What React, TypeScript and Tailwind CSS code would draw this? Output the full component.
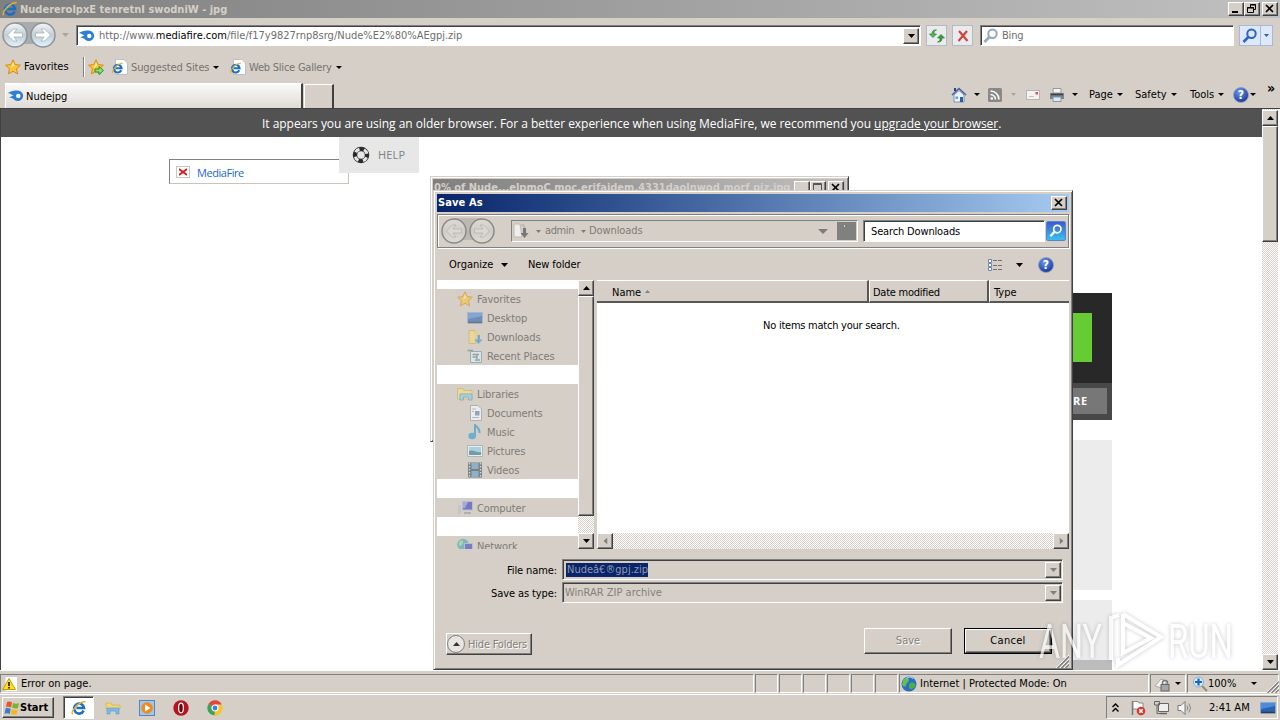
import type { ReactNode } from "react";
import clsx from "clsx";
import { twMerge } from "tailwind-merge";

const RAISED =
    "bg-[#d5cfc7] border border-t-white border-l-white border-b-[#404040] border-r-[#404040] shadow-[inset_-1px_-1px_0_#808080]";
const SUNKEN =
    "border border-t-[#808080] border-l-[#808080] border-b-white border-r-white shadow-[inset_1px_1px_0_#404040]";
const CHECKER = "bg-[repeating-conic-gradient(#ffffff_0_25%,#d5cfc7_0_50%)] bg-[length:2px_2px]";

type BoxProps = { className?: string; children?: ReactNode };

const Txt = ({ className, children }: BoxProps) => (
    <span className={clsx("block shrink-0 whitespace-nowrap", className)}>{children}</span>
);

const Arrow = ({ className, up }: { className?: string; up?: boolean }) => (
    <svg className={twMerge("h-[4px] w-[7px] shrink-0", className)} viewBox="0 0 7 4" fill="currentColor" preserveAspectRatio="none">
        <path d={up ? "M0 4 3.5 0 7 4Z" : "M0 0H7L3.5 4Z"} />
    </svg>
);

const Icon = ({ className, children }: BoxProps) => (
    <svg className={twMerge("size-4 shrink-0", className)} viewBox="0 0 16 16" fill="none">
        {children}
    </svg>
);

const IeIcon = ({ className, page }: { className?: string; page?: boolean }) => (
    <Icon className={className}>
        {page && <path d="M3.5 .5H12L15.5 4V15.5H3.5Z" fill="#fff" stroke="#b8c0cc" />}
        <g transform={page ? "translate(-.5 3) scale(.78)" : undefined}>
            <path d="M12.6 10.6A5 5 0 1 1 13 8H5.4" stroke="#1c6fc4" strokeWidth="2.6" />
            <path d="M4.4 6.2A4.2 4.2 0 0 1 9 4" stroke="#62b8f2" strokeWidth="1" />
            <path d="M1.6 14.2C-.8 11.5 9 .6 14.6 1.8" stroke="#e3b32c" strokeWidth="1.4" />
        </g>
    </Icon>
);

const FireIcon = ({ className }: { className?: string }) => (
    <Icon className={className}>
        <path d="M0 5C3 3 6 2.5 10 2.5A5.3 5.3 0 1 1 6 11.5C4.500 10 3 9.500 1 9.800C3 8.500 4 8 5.500 7.800C4 6.500 2 5.500 0 5Z" fill="#2f80d0" />
        <circle cx="10.300" cy="7.900" r="2.200" fill="#fff" />
    </Icon>
);

const Star = ({ className, add }: { className?: string; add?: boolean }) => (
    <Icon className={className}>
        <path d="M8 .8 10.200 5.600 15.400 6.200 11.500 9.700 12.600 14.900 8 12.300 3.400 14.900 4.500 9.700 .6 6.200 5.800 5.600Z" fill="#fbc53a" stroke="#d98a14" />
        <path d="M8 3 9.200 6.600 6 9Z" fill="#fff0a8" />
        {add && <path d="M7 10H11V7.500L15.500 11.500 11 15.500V13H7Z" fill="#8fdc6a" stroke="#2f8f2a" />}
    </Icon>
);

const Lens = ({ className, color = "#2a62c8" }: { className?: string; color?: string }) => (
    <Icon className={className}>
        <circle cx="9.500" cy="5.800" r="4.200" stroke={color} strokeWidth="2" />
        <path d="M6.300 9 1.500 14" stroke={color} strokeWidth="2.600" />
    </Icon>
);

const HelpIcon = ({ className }: { className?: string }) => (
    <span
        className={clsx(
            "flex size-4 shrink-0 items-center justify-center rounded-full border border-[#8f9bc0] bg-[radial-gradient(circle_at_40%_30%,#6f9aec,#1c3fa0_75%)] text-[12px] leading-none font-bold text-white",
            className
        )}
    >
        ?
    </span>
);

const CaptionButton = ({ kind, className }: { kind: "min" | "max" | "restore" | "close"; className?: string }) => (
    <div className={clsx("h-[14px] w-[16px] shrink-0", RAISED, className)}>
        <svg className="h-[12px] w-[14px]" viewBox="0 0 14 12" fill="none" stroke="#000">
            {kind === "min" && <path d="M3 9H9" strokeWidth="2" />}
            {kind === "max" && <path d="M2.500 1.500H10.500V9.500H2.500ZM2 2.500H11" stroke="#555" />}
            {kind === "restore" && <path d="M5.500 4V1.500H10.500V6.500H9M5 2H11M2.500 4.500H8.500V9.500H2.500ZM2 5H9" />}
            {kind === "close" && <path d="M3 2 10 9M10 2 3 9" strokeWidth="1.700" />}
        </svg>
    </div>
);

const ScrollButton = ({ dir, disabled, className }: { dir: "up" | "down" | "left" | "right"; disabled?: boolean; className?: string }) => (
    <div className={clsx("flex size-4 shrink-0 items-center justify-center", RAISED, disabled ? "text-[#808080]" : "text-black", className)}>
        <Arrow up={dir === "up"} className={clsx(dir === "left" && "rotate-90", dir === "right" && "-rotate-90")} />
    </div>
);

const NavCircles = ({ gray, className }: { gray?: boolean; className?: string }) => (
    <svg className={clsx("h-[28px] w-[56px] shrink-0", className)} viewBox="0 0 56 28" fill="none">
        <defs>
            <linearGradient id={gray ? "ballGray" : "ball"} x1="0" y1="0" x2="0" y2="1">
                <stop offset="0" stopColor={gray ? "#dedbd6" : "#f4f7f9"} />
                <stop offset=".5" stopColor={gray ? "#cfcbc6" : "#c3ced6"} />
                <stop offset="1" stopColor={gray ? "#dedad5" : "#e2f3fc"} />
            </linearGradient>
        </defs>
        <path d="M14 1H42V5C34 5 34 23 42 23H14C22 23 22 5 14 5Z" fill={gray ? "#bdb8b2" : "#a9abae"} />
        {[14, 42].map((cx) => (
            <g key={cx}>
                <circle cx={cx} cy="14" r="12" fill={gray ? "url(#ballGray)" : "url(#ball)"} stroke={gray ? "#8d8a86" : "#8e9499"} strokeWidth="1.500" />
                <path
                    d={
                        cx === 14
                            ? "M6.500 14 12.500 8H16L12.800 12H21.500V16H12.800L16 20H12.500Z"
                            : "M49.500 14 43.500 8H40L43.200 12H34.500V16H43.200L40 20H43.500Z"
                    }
                    fill={gray ? "#dbd7d2" : "#ffffff"}
                    stroke={gray ? "#b4b0ab" : "#9daab5"}
                    strokeWidth=".7"
                />
            </g>
        ))}
    </svg>
);

const Grip = ({ className }: { className?: string }) => (
    <svg className={clsx("size-[13px] shrink-0", className)} viewBox="0 0 13 13" fill="none">
        <path d="M0 13 13 0M4 13 13 4M8 13 13 8" stroke="#fff" />
        <path d="M1.500 13 13 1.500M5.500 13 13 5.500M9.500 13 13 9.500" stroke="#808080" strokeWidth="1.500" />
    </svg>
);

const AddressRow = () => (
    <div className="flex h-[35px] items-start text-[#6e6e6e]">
        <NavCircles className="mt-[3px] ml-px" />
        <Arrow className="mt-[15px] ml-[5px] text-[#aaa59f]" />
        <div className={clsx("mt-[7px] ml-[7px] flex h-[21px] w-[845px] items-center bg-white pr-px", SUNKEN)}>
            <FireIcon className="ml-[2px]" />
            <Txt className="ml-[4px] w-[380px] pt-px">
                http://www.<span className="text-black">mediafire.com</span>/file/f17y9827rnp8srg/Nude%E2%80%AEgpj.zip
            </Txt>
            <ScrollButton dir="down" className="ml-auto" />
        </div>
        <div className="mt-[7px] ml-[5px] flex size-[21px] items-center justify-center border border-[#b4bac4] bg-[#e9ebee]">
            <Icon>
                <path d="M7.500 2C5.500 2.500 5 3.500 5 6H7.500L4 9.500 .5 6H3C3 3 4.500 1.500 7.500 2Z" fill="#5cb356" stroke="#2c7f2b" strokeWidth=".7" />
                <path d="M8.500 14C10.500 13.500 11 12.500 11 10H8.500L12 6.500 15.500 10H13C13 13 11.500 14.500 8.500 14Z" fill="#3f9a3c" stroke="#2c7f2b" strokeWidth=".7" />
            </Icon>
        </div>
        <div className="mt-[7px] ml-[5px] flex size-[21px] items-center justify-center border border-[#b4bac4] bg-[#e9ebee]">
            <Icon>
                <path d="M4 3 12.500 13M12 3 3.500 13" stroke="#d0453c" strokeWidth="2.200" />
            </Icon>
        </div>
        <div className={clsx("mt-[7px] ml-[7px] flex h-[21px] w-[254px] items-center bg-white", SUNKEN)}>
            <Lens className="ml-[2px]" color="#8fa9bd" />
            <Txt className="ml-[3px] pt-px tracking-[-0.2px]">Bing</Txt>
        </div>
        <div className="mt-[7px] ml-[5px] flex h-[21px] w-[34px] items-center border border-[#a9b9d4] bg-[#dde8f8]">
            <Lens className="ml-[2px]" />
            <div className="ml-[2px] h-full w-px bg-[#a9b9d4]" />
            <Arrow className="ml-[3px] h-[3px] w-[5px] text-[#2a62a8]" />
        </div>
    </div>
);

const FavoritesRow = () => (
    <div className="flex h-[28px] items-center text-[#77736f]">
        <Star className="ml-[5px]" />
        <Txt className="ml-[3px] w-[59px] text-black">Favorites</Txt>
        <div className="h-[20px] w-[2px] border-l border-[#808080] bg-white" />
        <Star add className="ml-[3px]" />
        <IeIcon page className="ml-[8px]" />
        <Txt className="ml-[3px] w-[82px] pt-px tracking-[-0.1px]">Suggested Sites</Txt>
        <Arrow className="h-[3px] w-[6px] text-black" />
        <IeIcon page className="ml-[11px]" />
        <Txt className="ml-[3px] w-[87px] pt-px tracking-[-0.22px]">Web Slice Gallery</Txt>
        <Arrow className="h-[3px] w-[6px] text-black" />
    </div>
);

const TabRow = () => (
    <div className="flex h-[27px] items-end">
        <div className="ml-[5px] flex h-[25px] w-[298px] shrink-0 items-center border-t border-r-2 border-l border-t-white border-r-[#404040] border-l-white bg-linear-to-b from-[#fbfaf9] to-[#dfdbd6]">
            <FireIcon className="ml-[2px]" />
            <Txt className="ml-[2px] pt-px">Nudejpg</Txt>
        </div>
        <div className="ml-px h-[24px] w-[30px] shrink-0 border-t border-r-2 border-l border-t-white border-r-[#404040] border-l-white" />
        <div className="ml-[617px] flex h-[27px] items-center">
            <Icon>
                <path d="M1 8 8 1.500 15 8" stroke="#44619c" strokeWidth="1.600" />
                <path d="M3 8 8 3.500 13 8V15H3Z" fill="#eef3fa" stroke="#7b93bd" />
                <path d="M9 10H12V15H9Z" fill="#2e5ea8" />
                <path d="M4.500 9.500H7V12H4.500Z" fill="#64a0d0" />
                <path d="M3 1H5V4H3Z" fill="#2c3f8c" />
            </Icon>
            <Arrow className="ml-[7px] h-[3px] w-[6px]" />
            <Icon className="ml-[7px]">
                <rect x="1" y="1" width="14" height="14" rx="1.500" fill="#8b8987" />
                <path d="M3.500 7.500A5 5 0 0 1 8.500 12.500M3.500 4A8.500 8.500 0 0 1 12 12.500" stroke="#fff" strokeWidth="1.600" />
                <circle cx="4.800" cy="11.500" r="1.300" fill="#fff" />
            </Icon>
            <Arrow className="ml-[8px] h-[3px] w-[5px] text-[#aaa59f]" />
            <Icon className="ml-[9px]">
                <rect x="1.500" y="3.500" width="13" height="9" fill="#f5f3f2" stroke="#b9b4b4" />
                <path d="M10.500 5H13V7.500H10.500Z" fill="#d8505a" />
                <path d="M4 9.500H9" stroke="#c5c1c1" />
            </Icon>
            <Icon className="ml-[8px]">
                <path d="M4 1.500H12V6H4Z" fill="#f3f3f3" stroke="#999" />
                <path d="M1 6H15V12H1Z" fill="#7d8085" />
                <path d="M2 7.500H14" stroke="#3e4248" strokeWidth="1.500" />
                <path d="M4 10H12V14.500H4Z" fill="#dbe9f5" stroke="#8796a5" />
            </Icon>
            <Arrow className="ml-[7px] h-[3px] w-[6px]" />
            <Txt className="ml-[11px] w-[28px]">Page</Txt>
            <Arrow className="h-[3px] w-[6px]" />
            <Txt className="ml-[12px] w-[36px]">Safety</Txt>
            <Arrow className="h-[3px] w-[6px]" />
            <Txt className="ml-[13px] w-[28px]">Tools</Txt>
            <Arrow className="h-[3px] w-[6px]" />
            <HelpIcon className="ml-[9px]" />
            <Arrow className="ml-px h-[3px] w-[6px]" />
            <Txt className="mb-[14px] ml-[11px] text-[14px] leading-none font-bold">»</Txt>
        </div>
    </div>
);

const WebPage = () => (
    <div className="flex h-[562px] border-t border-l border-[#404040] bg-white">
        <div className="flex h-[561px] w-[1261px] flex-col overflow-hidden">
            <div className="flex h-[28px] shrink-0 items-center bg-[#525252] pt-[2px] pl-[261px] font-['Open_Sans',sans-serif] text-[12px] text-white">
                <Txt className="tracking-[-0.033px]">
                    It appears you are using an older browser. For a better experience when using MediaFire, we recommend you{" "}
                    <span className="underline">upgrade your browser</span>.
                </Txt>
            </div>
            <div className="flex h-[156px] shrink-0 items-start">
                <div className="mt-[22px] ml-[168px] flex h-[25px] w-[180px] items-center border border-[#808080] border-r-[#c8c4bc] border-b-[#c8c4bc]">
                    <div className="ml-[6px] flex h-[12px] w-[14px] items-center justify-center border border-[#c8c4c0]">
                        <svg className="size-[8px]" viewBox="0 0 8 8" stroke="#d02020" strokeWidth="2">
                            <path d="M0 1 8 7M8 1 0 7" />
                        </svg>
                    </div>
                    <Txt className="mt-[2px] ml-[7px] font-['Open_Sans',sans-serif] text-[11px] tracking-[-0.45px] text-[#1a66cc]">MediaFire</Txt>
                </div>
                <div className="-ml-[10px] flex h-[36px] w-[80px] items-center bg-[#e7e7e7] font-['Open_Sans',sans-serif] text-[11px] text-[#808080]">
                    <svg className="ml-[13px] size-[18px]" viewBox="0 0 18 18" fill="none">
                        <circle cx="9" cy="9" r="6" stroke="#2b2b2b" strokeWidth="4.500" />
                        <circle cx="9" cy="9" r="6" stroke="#e7e7e7" strokeWidth="3" strokeDasharray="4.700 4.720" strokeDashoffset="7" />
                    </svg>
                    <Txt className="ml-[8px] tracking-[0.2px]">HELP</Txt>
                </div>
            </div>
            <div className="ml-[811px] flex w-[300px] flex-col text-white">
                <div className="h-[90px] bg-[#282828] p-[20px]">
                    <div className="h-[49px] bg-[#66cc33]" />
                </div>
                <div className="h-[37px] bg-[#484848] px-[5px] pt-[5px]">
                    <div className="flex h-[26px] items-center justify-end bg-[#777777] pr-[19px] font-['Open_Sans',sans-serif] text-[11px] font-bold tracking-[0.8px]">
                        SHARE
                    </div>
                </div>
                <div className="mt-[20px] h-[150px] bg-[#ececec]" />
                <div className="mt-[10px] h-[60px] bg-[#ececec]" />
                <div className="h-[10px] bg-[#bcbcbc]" />
            </div>
        </div>
        <div className={clsx("flex w-[16px] flex-col", CHECKER)}>
            <ScrollButton dir="up" className="mt-px" />
            <div className={clsx("h-[116px]", RAISED)} />
            <ScrollButton dir="down" className="mt-auto" />
        </div>
    </div>
);

const Pane = ({ className, children }: BoxProps) => (
    <div className={clsx("flex h-[19px] shrink-0 items-center border border-t-[#808080] border-l-[#808080] border-r-white border-b-white", className)}>
        {children}
    </div>
);

const Globe = () => (
    <Icon className="ml-px">
        <circle cx="8" cy="8" r="7.500" fill="#2c6cc4" />
        <path d="M2 4C5 1 8 2 8 4S5 7 5 9 3 11 1 9Z" fill="#5fc05a" />
        <path d="M9 7C12 5 14 7 14.500 9S11 14 9 13 8 8 9 7Z" fill="#4aae4c" />
        <path d="M5 2.500C8 .5 11 1 12 3" stroke="#bfe0ff" />
    </Icon>
);

const StatusBar = () => (
    <div className="flex h-[24px] items-start gap-px border-t border-white pt-[3px]">
        <Pane className="w-[754px]">
            <Icon className="ml-px">
                <path d="M3 .5H15.500V15.500H3Z" fill="#fff" stroke="#cfcfcf" />
                <path d="M7 2.500 13.500 13.500H.7Z" fill="#ffdf1c" stroke="#c79a00" />
                <path d="M7 6V10M7 11V12.500" stroke="#000" strokeWidth="1.500" />
            </Icon>
            <Txt className="ml-[3px]">Error on page.</Txt>
        </Pane>
        <Pane className="w-[23px]" />
        <Pane className="w-[23px]" />
        <Pane className="w-[23px]" />
        <Pane className="w-[23px]" />
        <Pane className="w-[23px]" />
        <Pane className="w-[23px]" />
        <Pane className="w-[250px]">
            <Globe />
            <Txt className="ml-[3px]">Internet | Protected Mode: On</Txt>
        </Pane>
        <Pane className="w-[36px]">
            <Icon className="ml-[3px]">
                <path d="M1 10 7 3 13 5 8 12Z" fill="#f4f4f4" stroke="#aaa" />
                <path d="M8.500 9V7A2.500 2.500 0 0 1 13.500 7V9" stroke="#777" strokeWidth="1.500" />
                <rect x="7" y="8.500" width="8" height="6.500" fill="#a5a5a5" stroke="#666" />
            </Icon>
            <Arrow className="ml-[5px] h-[3px] w-[6px]" />
        </Pane>
        <Pane className="w-[92px]">
            <Icon className="ml-[4px]">
                <path d="M10 10 15 15" stroke="#9c8a6c" strokeWidth="2" />
                <circle cx="6.500" cy="6" r="5" fill="#d9ecfb" stroke="#7fb0d8" />
                <path d="M6.500 2.500V9.500M3 6H10" stroke="#1f62c4" strokeWidth="2.200" />
            </Icon>
            <Txt className="w-[41px]">100%</Txt>
            <Arrow className="ml-[2px] h-[3px] w-[6px]" />
            <Grip className="mt-[5px] ml-[9px]" />
        </Pane>
    </div>
);

const Monitor = ({ className }: { className?: string }) => (
    <Icon className={className}>
        <path d="M.5 2.500H15.500V13H.5Z" fill="#2a62b0" stroke="#8aa6cc" />
        <path d="M1 3H15V6L1 9Z" fill="#4f8bd6" />
        <path d="M1 12.500H15" stroke="#2a3c58" strokeWidth="1.500" />
    </Icon>
);

const Taskbar = () => (
    <div className="flex h-[25px] items-start border-t border-white">
        <div className={clsx("mt-[2px] ml-[2px] flex h-[21px] w-[52px] items-center", RAISED)}>
            <Icon className="ml-px">
                <path d="M3 2C5 1 6.500 1.500 8 2.500L7 7.500C5.500 6.500 4 6.500 2 7Z" fill="#e8562a" />
                <path d="M9 3C11 4 13 4 15 3L14 8C12 9 10 8.500 8 7.500Z" fill="#76b82a" />
                <path d="M1.600 8.500C3.500 7.800 5 8 6.700 9L5.700 14C4 13 2.500 13 .6 13.700Z" fill="#3a7bd0" />
                <path d="M7.800 9.300C9.500 10.300 11.500 10.300 13.700 9.500L12.700 14.200C10.500 15 8.500 15 6.800 14Z" fill="#f7b718" />
            </Icon>
            <Txt className="font-bold">Start</Txt>
        </div>
        <div className={clsx("mt-px ml-[9px] flex h-[23px] w-[31px] items-center justify-center bg-white", SUNKEN)}>
            <IeIcon />
        </div>
        <Icon className="mt-[5px] ml-[11px]">
            <path d="M1 3H6L7 5H15V9H1Z" fill="#f2d675" stroke="#cda94b" strokeWidth=".6" />
            <path d="M2 14V8H14V14H11V11H5V14Z" fill="#7cbce8" stroke="#5b96c4" strokeWidth=".6" />
        </Icon>
        <Icon className="mt-[5px] ml-[18px]">
            <rect x=".5" y=".5" width="15" height="15" fill="#9fc8ee" stroke="#5585bb" />
            <circle cx="8" cy="8" r="5.800" fill="#f08a1c" />
            <path d="M6 4.500 11.500 8 6 11.500Z" fill="#fff" />
        </Icon>
        <Icon className="mt-[5px] ml-[18px]">
            <circle cx="8" cy="8" r="7.700" fill="#b51420" />
            <ellipse cx="8" cy="8" rx="2.400" ry="4.800" fill="#6c0710" stroke="#fff" strokeWidth="1.200" />
        </Icon>
        <Icon className="mt-[5px] ml-[18px]">
            <path d="M8 8 1.500 4A7.500 7.500 0 0 1 14.800 4.500H8Z" fill="#e0473a" />
            <path d="M8 8 14.800 4.500A7.500 7.500 0 0 1 7.500 15.500Z" fill="#f7c52c" />
            <path d="M8 8 7.500 15.500A7.500 7.500 0 0 1 1.500 4Z" fill="#3aa457" />
            <circle cx="8" cy="8" r="3" fill="#3f7de0" stroke="#fff" strokeWidth="1.200" />
        </Icon>
        <Pane className="mt-px mr-[2px] ml-auto h-[23px] w-[172px]">
            <svg className="ml-[5px] h-[10px] w-[7px]" viewBox="0 0 7 10" fill="none" stroke="#000" strokeWidth="1.400">
                <path d="M.5 4 3.500 1 6.500 4M.5 8.500 3.500 5.500 6.500 8.500" />
            </svg>
            <Icon className="ml-[11px]">
                <path d="M2.500 15V1" stroke="#777" strokeWidth="1.500" />
                <path d="M3 1.500H8L9 3H13V9H3Z" fill="#fff" stroke="#888" />
                <circle cx="11" cy="11" r="4.300" fill="#d43830" />
                <path d="M9.300 9.300 12.700 12.700M12.700 9.300 9.300 12.700" stroke="#fff" strokeWidth="1.500" />
            </Icon>
            <Icon className="ml-[7px]">
                <path d="M5.500 3.500H15.500V11.500H5.500Z" fill="#eee" stroke="#666" />
                <path d="M7 13.500H14" stroke="#666" strokeWidth="1.500" />
                <path d="M1.500 1.500H6.500V5H1.500ZM4 5V13.500H7" fill="none" stroke="#666" />
            </Icon>
            <Icon className="ml-[8px]">
                <path d="M1 5.500H4L8 1.500V14.500L4 10.500H1Z" fill="#f6f6f6" stroke="#777" />
                <path d="M10 5.500Q11.500 8 10 10.500M12 3.500Q15 8 12 12.500" stroke="#888" />
            </Icon>
            <Txt className="ml-[16px] w-[43px]">2:41 AM</Txt>
            <Monitor className="ml-[8px]" />
        </Pane>
    </div>
);

const NAV_ICONS: Record<string, ReactNode> = {
    Favorites: <Star />,
    Desktop: <Monitor />,
    Downloads: (
        <Icon>
            <path d="M2 1.500H8L9 14.500H2Z" fill="#f7dc80" stroke="#d4ae4c" />
            <path d="M8 3H12V10H8Z" fill="#f3cf68" />
            <path d="M10.500 6V10.500H7.500L11.500 15 15.500 10.500H13V6Z" fill="#3a92dc" />
        </Icon>
    ),
    "Recent Places": (
        <Icon>
            <path d="M3.500 3.500H14.500V14.500H3.500Z" fill="#e4f0f4" stroke="#6f98a5" />
            <path d="M.5 2.500H6M5.500 6.500H12M5.500 9H10M8 12H13M10 6V11" stroke="#5a8794" strokeWidth="1.300" />
        </Icon>
    ),
    Libraries: (
        <Icon>
            <path d="M.5 2.500H6L7 4.500H15V13H.5Z" fill="#f5e283" stroke="#cdb65a" />
            <path d="M3 14V8H15V14H11.500V11H6.500V14Z" fill="#8fd0e4" stroke="#5c9fb8" />
        </Icon>
    ),
    Documents: (
        <Icon>
            <path d="M3.500 .5H11L14.500 4V15.500H3.500Z" fill="#fff" stroke="#8fa0b0" />
            <path d="M5 4H9M5 6.500H7M5 12.500H12" stroke="#8fb0c8" />
            <path d="M8 6H12.500V10.500H8Z" fill="#5a8ac0" />
        </Icon>
    ),
    Music: (
        <Icon>
            <path d="M8 12V1C10 3 13 4 12.500 9" stroke="#2696d0" strokeWidth="2" />
            <ellipse cx="5.200" cy="12" rx="3.800" ry="3.200" fill="#2a9ad4" />
        </Icon>
    ),
    Pictures: (
        <Icon>
            <path d="M.5 2.500H15.500V13.500H.5Z" fill="#fff" stroke="#8aa8b8" />
            <path d="M2 4H14V12H2Z" fill="#8fd0ec" />
            <path d="M2 8C6 6 9 10 14 9V12H2Z" fill="#2d7f94" />
        </Icon>
    ),
    Videos: (
        <Icon>
            <path d="M1 .5H15V15.500H1Z" fill="#3d4c55" />
            <path d="M4.500 1H11.500V7H4.500ZM4.500 9H11.500V15H4.500Z" fill="#5f9ccc" />
            <path d="M2.500 1V15M13.500 1V15" stroke="#e0e0e0" strokeWidth="1.300" strokeDasharray="1.500 1.500" />
        </Icon>
    ),
    Computer: (
        <Icon>
            <path d="M5.500 1.500H15.500V10H5.500Z" fill="#3a3ec4" stroke="#a9b4cc" />
            <path d="M6 2H11L8 8H6Z" fill="#7e92ec" />
            <path d="M1 5H4V14H1Z" fill="#b9bfc8" />
            <path d="M7 13H14" stroke="#99a" strokeWidth="2" />
        </Icon>
    ),
    Network: (
        <Icon>
            <circle cx="6" cy="6.500" r="5.800" fill="#45a7b8" />
            <path d="M2 4C4 1 7 2 6 5S3 8 2 8Z" fill="#8fd88c" />
            <path d="M7.500 5.500H15.500V12.500H7.500Z" fill="#3a48c8" stroke="#a9b4cc" />
        </Icon>
    ),
};

const NavItem = ({ name, root }: { name: string; root?: boolean }) => (
    <div className={clsx("flex h-[19px] shrink-0 items-center bg-[#d5cfc7]", root ? "pl-[20px]" : "pl-[30px]")}>
        <div className="opacity-60">{NAV_ICONS[name]}</div>
        <Txt className="ml-[4px] pt-[2px] tracking-[-0.1px]">{name}</Txt>
    </div>
);

const NavTree = () => (
    <div className="flex h-[269px] w-[141px] shrink-0 flex-col overflow-hidden bg-white pt-[9px] text-[#807b76]">
        <NavItem name="Favorites" root />
        <NavItem name="Desktop" />
        <NavItem name="Downloads" />
        <NavItem name="Recent Places" />
        <div className="h-[19px] shrink-0" />
        <NavItem name="Libraries" root />
        <NavItem name="Documents" />
        <NavItem name="Music" />
        <NavItem name="Pictures" />
        <NavItem name="Videos" />
        <div className="h-[19px] shrink-0" />
        <NavItem name="Computer" root />
        <div className="h-[19px] shrink-0" />
        <NavItem name="Network" root />
    </div>
);

const HeaderCell = ({ className, children }: BoxProps) => (
    <div
        className={clsx(
            "flex h-[23px] shrink-0 items-center border-t border-b-2 border-t-white border-b-[#595653] bg-[#d5cfc7] pt-[3px]",
            className
        )}
    >
        {children}
    </div>
);

const FileList = () => (
    <div className="ml-[3px] flex h-[269px] w-[472px] flex-col bg-white">
        <div className="flex">
            <HeaderCell className="w-[272px] border-r-2 border-r-[#595653] pl-[15px]">
                <Txt className="w-[33px]">Name</Txt>
                <Arrow up className="mb-[3px] h-[3px] w-[5px] text-[#808080]" />
            </HeaderCell>
            <HeaderCell className="w-[120px] border-r-2 border-l border-r-[#595653] border-l-white pl-[3px]">
                <Txt className="tracking-[-0.25px]">Date modified</Txt>
            </HeaderCell>
            <HeaderCell className="w-[80px] border-l border-l-white pl-[4px]">
                <Txt>Type</Txt>
            </HeaderCell>
        </div>
        <div className="flex-1 pt-[16px] pl-[166px]">
            <Txt className="tracking-[-0.24px]">No items match your search.</Txt>
        </div>
        <div className={clsx("flex h-[16px] justify-between", CHECKER)}>
            <ScrollButton dir="left" disabled />
            <ScrollButton dir="right" disabled />
        </div>
    </div>
);

const ComboRow = ({ label, children }: { label: string; children: ReactNode }) => (
    <div className="flex h-[21px] items-center">
        <Txt className="w-[120px] pt-[2px] text-right tracking-[-0.1px]">{label}</Txt>
        <div className={clsx("ml-[5px] flex h-[21px] w-[501px] items-center pr-px text-[#85807b]", SUNKEN)}>
            {children}
            <ScrollButton dir="down" disabled className="ml-auto" />
        </div>
    </div>
);

const DownloadWindow = () => (
    <div className="absolute top-[176px] left-[430px] h-[266px] w-[419px] border border-t-[#d5cfc7] border-r-[#404040] border-b-[#404040] border-l-[#d5cfc7] bg-[#d5cfc7] p-[2px] shadow-[inset_1px_1px_0_#fff,inset_-1px_-1px_0_#808080]">
        <div className="flex h-[18px] items-center bg-linear-to-r from-[#808080] to-[#c0c0c0] pr-[2px] pl-px font-bold text-[#d5cfc7]">
            <Txt className="w-[357px] overflow-hidden">0% of Nude...elpmoC moc.erifaidem.4331daolnwod morf piz.jpg</Txt>
            <CaptionButton kind="min" className="ml-auto" />
            <CaptionButton kind="max" />
            <CaptionButton kind="close" className="ml-[2px]" />
        </div>
    </div>
);

const SaveAsDialog = () => (
    <div className="absolute top-[190px] left-[433px] flex h-[480px] w-[640px] flex-col border border-t-[#d5cfc7] border-r-[#404040] border-b-[#404040] border-l-[#d5cfc7] bg-[#d5cfc7] p-[3px] shadow-[inset_1px_1px_0_#fff,inset_-1px_-1px_0_#808080]">
        <div className="flex h-[18px] shrink-0 items-center bg-linear-to-r from-[#0a246a] to-[#a6caf0] pr-[2px] pl-px font-bold text-white">
            <Txt className="tracking-[0.1px]">Save As</Txt>
            <CaptionButton kind="close" className="ml-auto" />
        </div>

        <div className="mt-[2px] flex h-[34px] shrink-0 items-start border border-[#808080] shadow-[inset_1px_1px_0_#fff,1px_1px_0_#fff]">
            <NavCircles gray className="mt-[2px] ml-[2px]" />
            <div className="mt-[5px] ml-[15px] flex h-[22px] w-[347px] items-center border border-t-[#808080] border-r-white border-b-white border-l-[#808080] text-[#807b76]">
                <Icon className="ml-px">
                    <path d="M1 1H7L9 14H1Z" fill="#efedea" stroke="#bbb" />
                    <path d="M8 2H11V9" stroke="#aaa" />
                    <path d="M10 5V10H7.500L11.500 15 15.500 10H13V5Z" fill="#777" />
                </Icon>
                <Arrow className="ml-[7px] h-[3px] w-[5px]" />
                <Txt className="ml-[4px] w-[36px] tracking-[-0.4px]">admin</Txt>
                <Arrow className="h-[3px] w-[5px]" />
                <Txt className="ml-[3px] tracking-[-0.1px]">Downloads</Txt>
                <Arrow className="ml-auto h-[5px] w-[10px]" />
                <div className="mr-px ml-[9px] h-[18px] w-[19px] bg-[#808080] pt-[3px] pl-[7px]">
                    <div className="h-[2px] w-px bg-[#d5cfc7]" />
                </div>
            </div>
            <div className={clsx("mt-[5px] ml-[5px] flex h-[22px] w-[182px] items-center bg-white pt-px pl-[7px]", SUNKEN)}>
                <Txt className="tracking-[-0.15px]">Search Downloads</Txt>
            </div>
            <div className="mt-[6px] ml-px flex size-[20px] items-center justify-center rounded-[2px] border border-[#5a86c8] bg-linear-to-b from-[#3c58d0] to-[#35c0f0]">
                <Lens color="#ffffff" className="size-[14px]" />
            </div>
        </div>

        <div className="flex h-[32px] shrink-0 items-center pt-px pl-[12px]">
            <Txt className="w-[52px]">Organize</Txt>
            <Arrow />
            <Txt className="ml-[20px] tracking-[-0.1px]">New folder</Txt>
            <Icon className="mr-[13px] ml-auto">
                <path d="M1.500 2.500H4.500V5.500H1.500ZM1.500 6.500H4.500V9.500H1.500ZM1.500 10.500H4.500V13.500H1.500Z" fill="#fff" stroke="#6c86b8" />
                <path d="M6 3.500H16M6 8.500H16M6 12.500H16" stroke="#707070" strokeDasharray="4 1" />
            </Icon>
            <Arrow />
            <HelpIcon className="mr-[15px] ml-[15px]" />
        </div>

        <div className="flex h-[269px] shrink-0">
            <NavTree />
            <div className={clsx("flex w-[16px] flex-col", CHECKER)}>
                <ScrollButton dir="up" />
                <div className={clsx("h-[220px]", RAISED)} />
                <ScrollButton dir="down" className="mt-auto" />
            </div>
            <FileList />
        </div>

        <div className="mt-[10px] flex shrink-0 flex-col gap-[2px]">
            <ComboRow label="File name:">
                <Txt className="ml-[3px] w-[82px] bg-[#0a246a] pl-px leading-[14px] text-[#8f98b0]">Nudeâ€®gpj.zip</Txt>
            </ComboRow>
            <ComboRow label="Save as type:">
                <Txt className="ml-[2px] pt-px">WinRAR ZIP archive</Txt>
            </ComboRow>
        </div>

        <div className="mt-[25px] flex h-[27px] shrink-0 items-start text-[#85807b]">
            <div className={clsx("mt-[5px] ml-[9px] flex h-[22px] w-[86px] items-center", RAISED)}>
                <div className="flex size-[18px] shrink-0 items-center justify-center rounded-full border border-[#85807b] bg-[#e8e6e3] text-[#333]">
                    <Arrow up />
                </div>
                <Txt className="ml-[3px] pt-px tracking-[-0.2px] [text-shadow:1px_1px_0_#fff]">Hide Folders</Txt>
            </div>
            <div className={clsx("ml-[332px] flex h-[26px] w-[88px] items-center justify-center", RAISED)}>
                <Txt className="[text-shadow:1px_1px_0_#fff]">Save</Txt>
            </div>
            <div className="ml-[12px] h-[26px] w-[88px] border border-black">
                <div className={clsx("flex h-[24px] items-center justify-center text-black", RAISED)}>
                    <Txt className="tracking-[0.3px]">Cancel</Txt>
                </div>
            </div>
        </div>
        <Grip className="mt-auto ml-auto" />
    </div>
);

const Watermark = () => (
    <svg
        className="absolute top-[602px] left-[1032px] h-[72px] w-[208px] overflow-visible drop-shadow-[0_0_2px_rgba(0,0,0,0.3)]"
        viewBox="0 0 208 72"
        fill="none"
        opacity=".7"
    >
        <g fill="#fff" fontFamily="Roboto, sans-serif" fontSize="48">
            <text x="7" y="56" textLength="63" lengthAdjust="spacingAndGlyphs">ANY</text>
            <text x="136" y="56" textLength="65" lengthAdjust="spacingAndGlyphs">RUN</text>
        </g>
        <path d="M79 58V16L87 13M91 12 129 35 86 63V56M91 12V51L119 36 91 21" stroke="#fff" strokeWidth="4" />
    </svg>
);

export default function App() {
    return (
        <div className="relative h-[720px] w-[1280px] overflow-hidden bg-[#d5cfc7] font-['DejaVu_Sans_Condensed','DejaVu_Sans',sans-serif] text-[11px] leading-[14px] text-black">
            <div className="flex h-[18px] items-center bg-linear-to-r from-[#808080] to-[#c0c0c0] pr-[2px] pl-[2px] text-[#d5cfc7]">
                <IeIcon />
                <Txt className="ml-[2px] pt-px font-bold">NudererolpxE tenretnI swodniW - jpg</Txt>
                <CaptionButton kind="min" className="ml-auto" />
                <CaptionButton kind="restore" />
                <CaptionButton kind="close" className="ml-[2px]" />
            </div>
            <AddressRow />
            <FavoritesRow />
            <TabRow />
            <WebPage />
            <StatusBar />
            <Taskbar />

            <DownloadWindow />
            <SaveAsDialog />
            <Watermark />
        </div>
    );
}
